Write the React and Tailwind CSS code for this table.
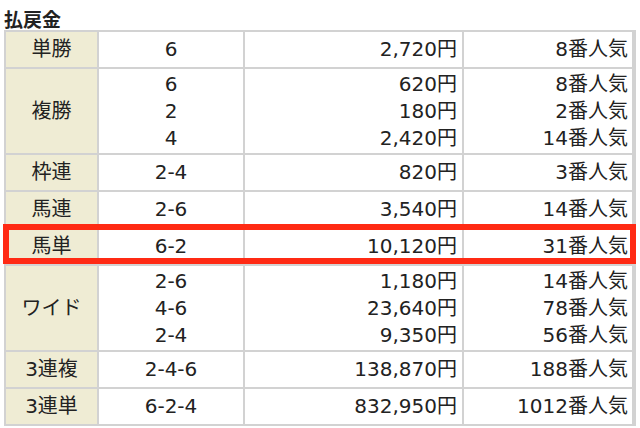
const rows = [
  { label: "単勝", combos: ["6"], pays: ["2,720円"], pops: ["8番人気"] },
  { label: "複勝", combos: ["6", "2", "4"], pays: ["620円", "180円", "2,420円"], pops: ["8番人気", "2番人気", "14番人気"] },
  { label: "枠連", combos: ["2-4"], pays: ["820円"], pops: ["3番人気"] },
  { label: "馬連", combos: ["2-6"], pays: ["3,540円"], pops: ["14番人気"] },
  { label: "馬単", combos: ["6-2"], pays: ["10,120円"], pops: ["31番人気"], mark: true },
  { label: "ワイド", combos: ["2-6", "4-6", "2-4"], pays: ["1,180円", "23,640円", "9,350円"], pops: ["14番人気", "78番人気", "56番人気"] },
  { label: "3連複", combos: ["2-4-6"], pays: ["138,870円"], pops: ["188番人気"] },
  { label: "3連単", combos: ["6-2-4"], pays: ["832,950円"], pops: ["1012番人気"] },
];

const Lines = ({ items }) => (
  <>
    {items.map((t, i) => (
      <div key={i}>{t}</div>
    ))}
  </>
);

const App = () => {
  return (
    <div
      className="w-[640px] h-[428px] bg-white text-[#222] overflow-hidden"
      style={{ fontFamily: '"DejaVu Sans", "Noto Sans CJK JP", sans-serif' }}
    >
      <h2 className="mt-[8px] ml-[4px] text-[19px] leading-[22px] font-bold font-['Noto_Sans_CJK_JP',sans-serif]">
        払戻金
      </h2>

      <div className="ml-[4px] w-[632px] flex flex-col gap-[2px] p-[2px] bg-[#d2d2d2] text-[20px] leading-[27px]">
        {rows.map((r) => {
          const h = r.combos.length > 1 ? "h-[84px]" : "h-[35px]";
          return (
            <div key={r.label} className={`relative flex gap-[2px] ${h}`}>
              <div className="w-[91px] flex items-center justify-center bg-[#efecd4]">
                {r.label}
              </div>
              <div className="w-[144px] flex flex-col justify-center items-center bg-white">
                <Lines items={r.combos} />
              </div>
              <div className="w-[217px] flex flex-col justify-center items-end pr-[5px] bg-white">
                <Lines items={r.pays} />
              </div>
              <div className="w-[168px] flex flex-col justify-center items-end pr-[4px] bg-white">
                <Lines items={r.pops} />
              </div>
              {r.mark && (
                <div className="absolute left-[-3px] right-[-2px] top-[-5px] bottom-0 border-[6px] border-[#ff2a14]" />
              )}
            </div>
          );
        })}
      </div>
    </div>
  );
};

export default App;
